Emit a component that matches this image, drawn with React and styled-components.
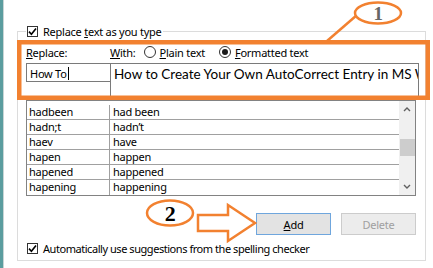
import React from 'react'
import styled, { createGlobalStyle } from 'styled-components'

const GlobalStyle = createGlobalStyle`
    html, body {
        margin: 0;
        padding: 0;
        background: #ffffff;
        overflow: hidden;
    }
    body {
        font-family: "Noto Sans", "Segoe UI", sans-serif;
        font-size: 11px;
        letter-spacing: -0.25px;
        color: #000000;
    }
`

const ORANGE = '#f28130'

const Page = styled.div`
    position: relative;
    display: flex;
    width: 433px;
    height: 268px;
    overflow: hidden;
`
const Edge = styled.div`
    width: 3px;
    background: #5b9d9f;
    border-right: 1px solid #c9d5d5;
`
const Main = styled.div`
    padding: 24px 0 0 13px;
`
const Group = styled.fieldset`
    margin: 0;
    width: 392px;
    min-width: 0;
    padding: 0 7px 5px 8px;
    border: 1px solid #dcdcdc;
`
const Legend = styled.legend`
    display: flex;
    align-items: center;
    gap: 5px;
    padding: 0 1px;
    height: 14px;
`
const CheckBox = styled.span`
    display: inline-flex;
    align-items: center;
    justify-content: center;
    width: 11px;
    height: 11px;
    box-sizing: border-box;
    border: 1px solid #333333;
    background: #ffffff;
`
const LabelRow = styled.div`
    display: flex;
    align-items: center;
    height: 16px;
    margin-top: 6px;
`
const FieldLabel = styled.span`
    width: ${p => p.$width || 'auto'};
    margin-right: ${p => p.$gap || '0'};
`
const RadioOption = styled.span`
    display: inline-flex;
    align-items: center;
    gap: 4px;
    margin-right: ${p => p.$gap || '0'};
`
const RadioCircle = styled.span`
    display: inline-flex;
    align-items: center;
    justify-content: center;
    width: 12px;
    height: 12px;
    box-sizing: border-box;
    border: 1px solid #333333;
    border-radius: 50%;
    background: #ffffff;
    &::after {
        content: '';
        display: ${p => p.$checked ? 'block' : 'none'};
        width: 6px;
        height: 6px;
        border-radius: 50%;
        background: #1a1a1a;
    }
`
const InputRow = styled.div`
    display: flex;
    align-items: flex-start;
    margin-top: 3px;
`
const ReplaceBox = styled.div`
    flex-shrink: 0;
    width: 84px;
    height: 19px;
    box-sizing: border-box;
    border: 1px solid #7a7a7a;
    border-right: none;
    padding: 1px 0 0 3px;
    display: flex;
    align-items: center;
`
const Caret = styled.span`
    display: inline-block;
    width: 0;
    height: 13px;
    border-left: 1px solid #000000;
    margin-left: 1px;
`
const WithBox = styled.div`
    flex-shrink: 0;
    width: 309px;
    height: 36px;
    box-sizing: border-box;
    border: 1px solid #7a7a7a;
    padding: 2px 0 0 3px;
    font-family: Lato, "Noto Sans", sans-serif;
    font-size: 13.5px;
    letter-spacing: 0;
    white-space: nowrap;
    overflow: hidden;
`
const ListBox = styled.div`
    display: flex;
    width: 390px;
    height: 96px;
    box-sizing: border-box;
    margin-top: 1px;
    border: 1px solid #828282;
    padding-top: 4px;
`
const Rows = styled.div`
    flex: 1;
`
const Row = styled.div`
    display: flex;
    height: 15px;
    box-sizing: border-box;
    border-bottom: 1px solid #a0a0a0;
    &:last-child {
        border-bottom: none;
    }
`
const Cell = styled.div`
    box-sizing: border-box;
    width: ${p => p.$width || 'auto'};
    flex: ${p => p.$width ? 'none' : '1'};
    padding-left: ${p => p.$pad || '2px'};
    border-right: ${p => p.$divider ? '1px solid #a0a0a0' : 'none'};
    line-height: 14px;
    white-space: nowrap;
`
const ScrollBar = styled.div`
    display: flex;
    flex-direction: column;
    align-items: center;
    width: 16px;
    margin-top: -4px;
    background: #f0f0f0;
`
const ScrollArrow = styled.div`
    height: 17px;
    display: flex;
    align-items: center;
    justify-content: center;
`
const Track = styled.div`
    flex: 1;
    width: 100%;
    padding-top: 21px;
`
const Thumb = styled.div`
    width: 15px;
    margin: 0 auto;
    height: 17px;
    background: #cdcdcd;
`
const ButtonRow = styled.div`
    display: flex;
    justify-content: flex-end;
    gap: 10px;
    width: 390px;
    margin-top: 17px;
`
const Button = styled.div`
    width: 75px;
    height: 22px;
    box-sizing: border-box;
    display: flex;
    align-items: center;
    justify-content: center;
    border: 1px solid ${p => p.$disabled ? '#cccccc' : '#6fa6dd'};
    background: ${p => p.$disabled ? '#ececec' : '#e3e3e3'};
    color: ${p => p.$disabled ? '#a0a0a0' : '#000000'};
`
const CheckRow = styled.div`
    display: flex;
    align-items: center;
    gap: 5px;
    height: 14px;
    margin-top: 6px;
    padding-left: 1px;
    letter-spacing: -0.45px;
`
const Overlay = styled.svg`
    position: absolute;
    left: 0;
    top: 0;
    pointer-events: none;
`

const Check = () => (
    <CheckBox>
        <svg width="9" height="9" viewBox="0 0 9 9">
            <path d="M1 4.6 L3.4 7.2 L8 1.4" fill="none" stroke="#000" strokeWidth="1.6" />
        </svg>
    </CheckBox>
)

const Chevron = ({ down }) => (
    <svg width="8" height="5" viewBox="0 0 8 5">
        <path d={down ? 'M1 1 L4 4 L7 1' : 'M1 4 L4 1 L7 4'} fill="none" stroke="#606060" strokeWidth="1.4" />
    </svg>
)

const entries = [
    ['hadbeen', 'had been'],
    ['hadn;t', 'hadn\u2019t'],
    ['haev', 'have'],
    ['hapen', 'happen'],
    ['hapened', 'happened'],
    ['hapening', 'happening'],
]

const Annotations = () => (
    <Overlay width="433" height="268" viewBox="0 0 433 268">
        <rect x="19.25" y="42.25" width="408.5" height="55.5" fill="none" stroke={ORANGE} strokeWidth="4.5" />
        <line x1="357" y1="15" x2="327" y2="41" stroke={ORANGE} strokeWidth="2.5" />
        <ellipse cx="378" cy="13" rx="23" ry="10.5" fill="#ffffff" stroke={ORANGE} strokeWidth="2.5" />
        <text x="378" y="20" textAnchor="middle" fontFamily="'Liberation Serif', serif" fontWeight="bold" fontSize="19" fill="#666666">1</text>
        <ellipse cx="170" cy="213" rx="23" ry="12.5" fill="none" stroke={ORANGE} strokeWidth="2.5" />
        <text x="170" y="221" textAnchor="middle" fontFamily="'Liberation Serif', serif" fontWeight="bold" fontSize="22" fill="#000000">2</text>
        <polygon points="198,215 228,215 228,205 255,223 228,241 228,231 198,231" fill="none" stroke={ORANGE} strokeWidth="2.5" strokeLinejoin="miter" />
    </Overlay>
)

const App = () => {
    return (
        <Page>
            <GlobalStyle />
            <Edge />
            <Main>
                <Group>
                    <Legend>
                        <Check />
                        <span>Replace <u>t</u>ext as you type</span>
                    </Legend>
                    <LabelRow>
                        <FieldLabel $width="84px"><u>R</u>eplace:</FieldLabel>
                        <FieldLabel $gap="8px"><u>W</u>ith:</FieldLabel>
                        <RadioOption $gap="14px">
                            <RadioCircle />
                            <span><u>P</u>lain text</span>
                        </RadioOption>
                        <RadioOption>
                            <RadioCircle $checked />
                            <span><u>F</u>ormatted text</span>
                        </RadioOption>
                    </LabelRow>
                    <InputRow>
                        <ReplaceBox>How To<Caret /></ReplaceBox>
                        <WithBox>How to Create Your Own AutoCorrect Entry in MS Word</WithBox>
                    </InputRow>
                    <ListBox>
                        <Rows>
                            {entries.map(([from, to]) => (
                                <Row key={from}>
                                    <Cell $width="83px" $divider>{from}</Cell>
                                    <Cell $pad="3px">{to}</Cell>
                                </Row>
                            ))}
                        </Rows>
                        <ScrollBar>
                            <ScrollArrow><Chevron /></ScrollArrow>
                            <Track><Thumb /></Track>
                            <ScrollArrow><Chevron down /></ScrollArrow>
                        </ScrollBar>
                    </ListBox>
                    <ButtonRow>
                        <Button><u>A</u>dd</Button>
                        <Button $disabled>Delete</Button>
                    </ButtonRow>
                    <CheckRow>
                        <Check />
                        <span>Automatically use suggestions from the spelling checker</span>
                    </CheckRow>
                </Group>
            </Main>
            <Annotations />
        </Page>
    )
}

export default App
